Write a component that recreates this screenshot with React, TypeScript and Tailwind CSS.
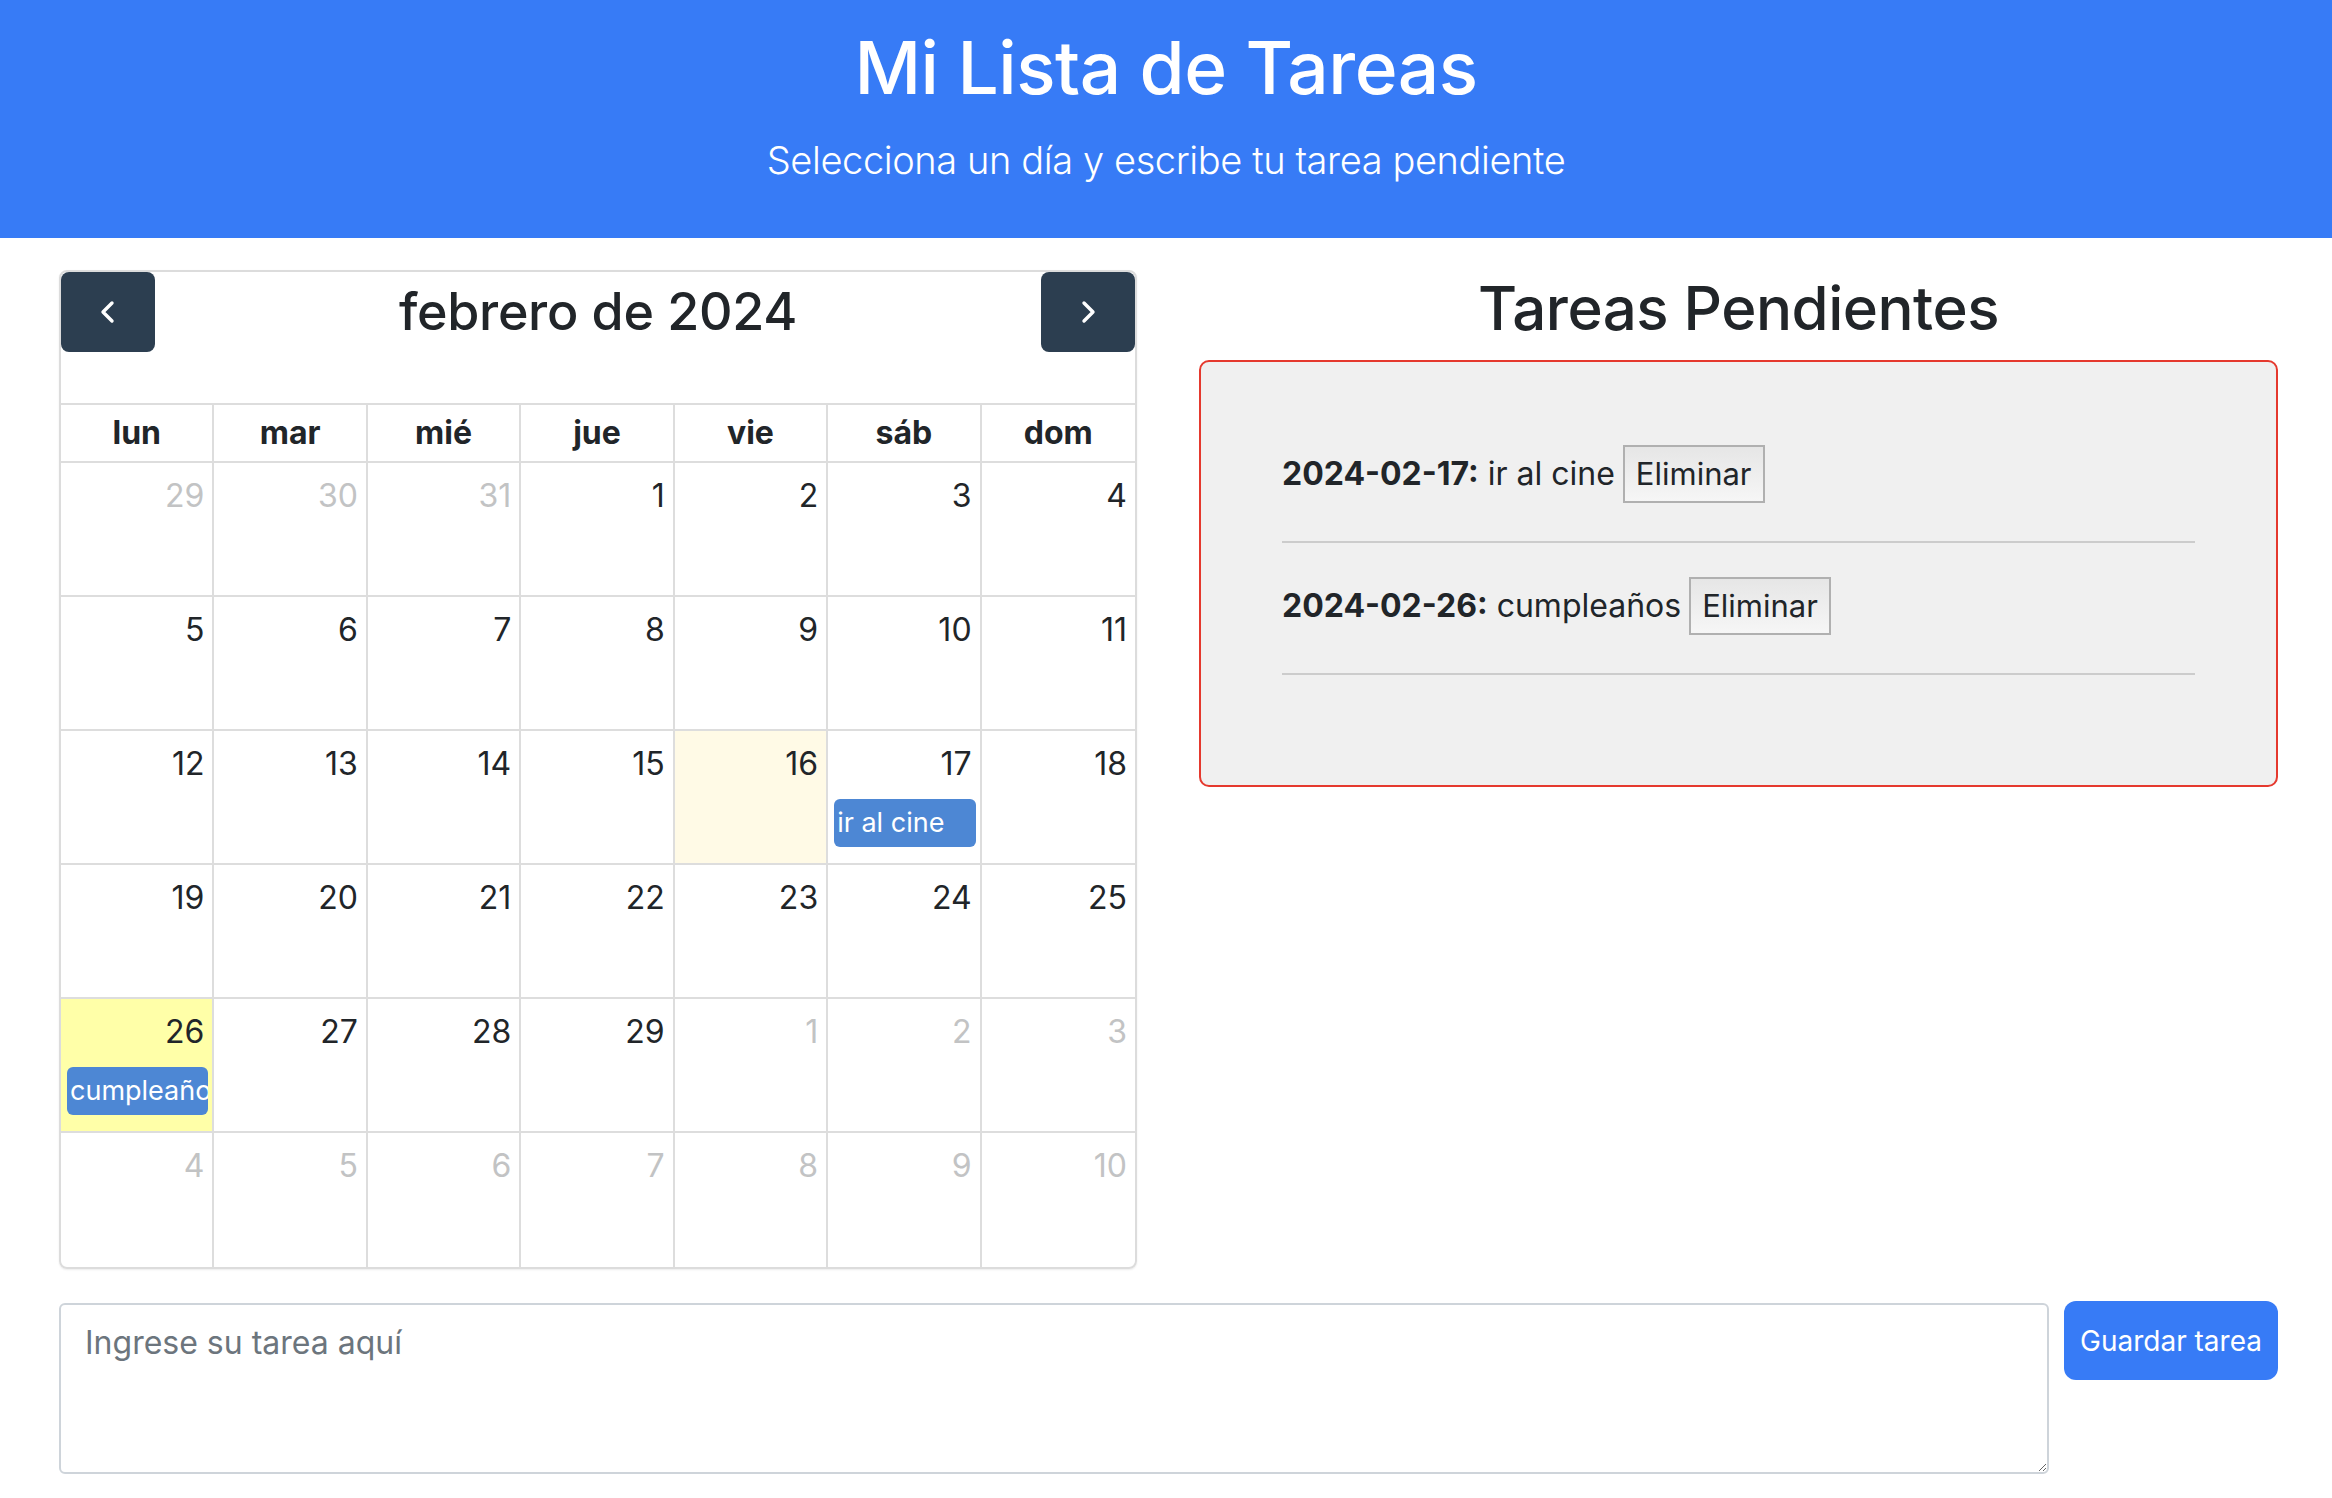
import React from "react"

type Day = { n: number; out?: boolean; today?: boolean; picked?: boolean; event?: string }

const weekdays = ["lun", "mar", "mié", "jue", "vie", "sáb", "dom"]

const buildDays = (): Day[] => {
  const days: Day[] = [{ n: 29, out: true }, { n: 30, out: true }, { n: 31, out: true }]
  for (let i = 1; i <= 29; i++) {
    const d: Day = { n: i }
    if (i === 16) d.today = true
    if (i === 17) d.event = "ir al cine"
    if (i === 26) {
      d.picked = true
      d.event = "cumpleaños"
    }
    days.push(d)
  }
  for (let i = 1; i <= 10; i++) days.push({ n: i, out: true })
  return days
}

const tasks = [
  { date: "2024-02-17", text: "ir al cine" },
  { date: "2024-02-26", text: "cumpleaños" },
]

const Chevron = ({ dir }: { dir: "left" | "right" }) => (
  <svg width="40" height="40" viewBox="0 0 20 20" fill="none" stroke="white" strokeWidth="1.7" strokeLinecap="round" strokeLinejoin="round">
    {dir === "left" ? <polyline points="12,5.5 7.5,10 12,14.5" /> : <polyline points="8,5.5 12.5,10 8,14.5" />}
  </svg>
)

const Calendar = () => {
  const days = buildDays()
  return (
    <div className="w-[1078px] shrink-0 border-2 border-[#dcdcdc] rounded-[8px] shadow-[0_1px_2px_rgba(0,0,0,0.08)]">
      <div className="flex items-center justify-between h-[80px]">
        <button className="w-[94px] h-[80px] bg-[#2c3e50] rounded-[8px] flex items-center justify-center">
          <Chevron dir="left" />
        </button>
        <h2 className="text-[52px] leading-none font-medium tracking-[-0.3px] text-[#212529]">febrero de 2024</h2>
        <button className="w-[94px] h-[80px] bg-[#2c3e50] rounded-[8px] flex items-center justify-center">
          <Chevron dir="right" />
        </button>
      </div>
      <div className="mt-[51px] grid grid-cols-7 border-t-2 border-[#dddddd]">
        {weekdays.map((w, i) => (
          <div
            key={w}
            className={`h-[58px] flex items-center justify-center text-[32px] font-bold text-[#212529] border-b-2 border-[#dddddd] ${i < 6 ? "border-r-2" : ""}`}
          >
            {w}
          </div>
        ))}
        {days.map((d, i) => (
          <div
            key={i}
            className={`h-[134px] flex flex-col border-[#dddddd] ${i < 35 ? "border-b-2" : ""} ${i % 7 < 6 ? "border-r-2" : ""} ${
              d.picked ? "bg-[#ffffa8]" : d.today ? "bg-[#fffae6]" : ""
            }`}
          >
            <div className={`text-right pr-[8px] pt-[13px] text-[32px] leading-[40px] ${d.out ? "text-[#c2c3c4]" : "text-[#212529]"}`}>
              {d.n}
            </div>
            {d.event && (
              <div className="mt-[15px] ml-[6px] mr-[4px] h-[48px] rounded-[6px] bg-[#4d87d4] text-white text-[27px] leading-[48px] pl-[3px] whitespace-nowrap overflow-hidden">
                {d.event}
              </div>
            )}
          </div>
        ))}
      </div>
    </div>
  )
}

export default function App() {
  return (
    <div className="min-h-screen bg-white font-['Inter','Liberation_Sans',sans-serif] text-[#212529]">
      <header className="h-[238px] bg-[#377bf6] text-white text-center pt-[20px]">
        <h1 className="text-[73px] leading-[96px] font-medium tracking-[-0.5px]">Mi Lista de Tareas</h1>
        <p className="mt-[20px] text-[38px] leading-[48px] font-light tracking-[-0.4px]">Selecciona un día y escribe tu tarea pendiente</p>
      </header>

      <main className="pl-[59px] pr-[54px] pt-[32px]">
        <div className="flex gap-[62px]">
          <Calendar />
          <div className="flex-1">
            <h2 className="text-center text-[60px] leading-[77px] font-medium tracking-[-0.5px]">Tareas Pendientes</h2>
            <div className="mt-[13px] bg-[#f0f0f0] border-2 border-[#e5392e] rounded-[10px] px-[81px] pt-[49px] pb-[110px]">
              <ul>
                {tasks.map((t) => (
                  <li key={t.date} className="pt-[34px] pb-[38px] border-b-2 border-[#cccccc] flex items-center text-[32px] leading-[58px]">
                    <strong className="font-bold">{t.date}:</strong>
                    <span className="ml-[9px]">{t.text}</span>
                    <button className="ml-[8px] h-[58px] px-[11px] border-2 border-[#b0b0b0] bg-gradient-to-b from-[#e6e6e6] to-[#f6f6f6] text-[31px] leading-[54px] text-[#212529]">
                      Eliminar
                    </button>
                  </li>
                ))}
              </ul>
            </div>
          </div>
        </div>

        <div className="mt-[34px] flex items-start gap-[15px]">
          <textarea
            placeholder="Ingrese su tarea aquí"
            className="flex-1 h-[171px] border-2 border-[#ced4da] rounded-[6px] px-[24px] py-[14px] text-[32px] leading-[48px] placeholder:text-[#6c757d] outline-none"
          />
          <button className="w-[214px] h-[79px] -mt-[2px] bg-[#377bf6] text-white text-[28px] rounded-[12px]">Guardar tarea</button>
        </div>
      </main>
    </div>
  )
}
